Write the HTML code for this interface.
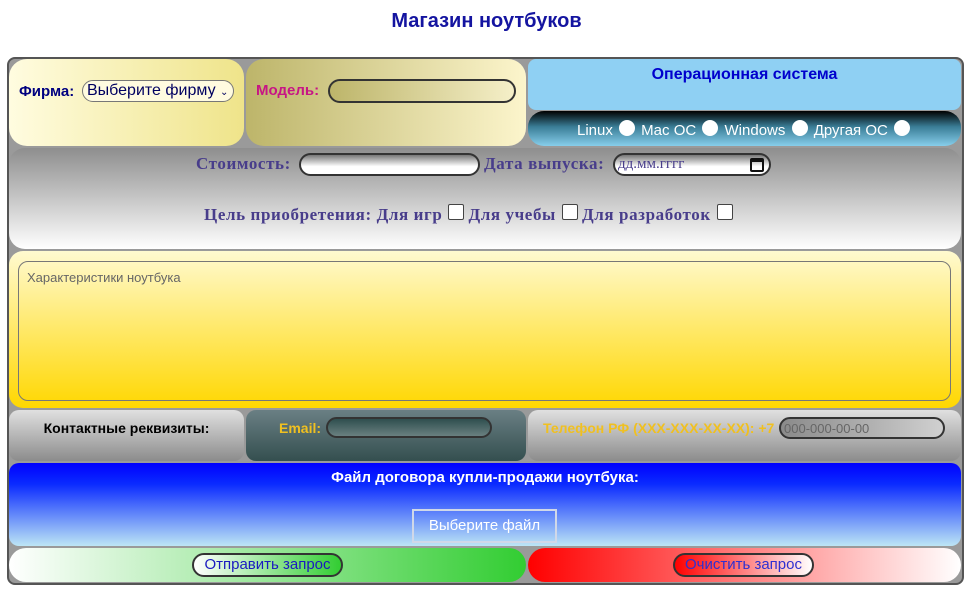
<!DOCTYPE html>
<html><head><meta charset="utf-8"><style>
*{box-sizing:border-box;margin:0;padding:0}
body{width:973px;height:595px;background:#fff;position:relative;font-family:"Liberation Sans",sans-serif;overflow:hidden}
.a{position:absolute}
h1{position:absolute;left:0;width:973px;top:10px;text-align:center;font-size:20px;color:#1414a0;font-weight:bold}
.outer{left:7px;top:57px;width:957px;height:528px;background:#9a9a9a;border:2px solid #555;border-radius:8px}
.c{position:absolute;border-radius:18px}
.t{position:absolute;white-space:nowrap}
.inp{position:absolute;border:2px solid #333;border-radius:12px}
.rad{display:inline-block;width:16px;height:16px;border-radius:50%;background:#fff;vertical-align:-1px;margin:0 2px}
.chk{display:inline-block;width:16px;height:16px;background:#fff;border:1px solid #444;border-radius:2px;vertical-align:0;margin:0 4px 0 6px}
.sf{font-family:"Liberation Serif",serif;font-weight:bold;color:#483d8b;font-size:17px;letter-spacing:0.6px}
</style></head><body>
<h1>Магазин ноутбуков</h1>
<div class="a outer"></div>
<div class="c" style="left:9px;top:59px;width:235px;height:87px;background:linear-gradient(to right,#fffce0,#efe48a)"></div>
<div class="t" style="left:19px;top:83px;font-size:15px;font-weight:bold;color:#000080">Фирма:</div>
<div class="a" style="left:82px;top:80px;width:152px;height:22px;border:1px solid #777;border-radius:11px;background:#fffbe0;font-size:16px;color:#000060;padding:1px 0 0 4px;white-space:nowrap">Выберите фирму <span style="font-size:10px">⌄</span></div>
<div class="c" style="left:246px;top:59px;width:280px;height:87px;background:linear-gradient(to right,#bdb56a,#fcf5cc)"></div>
<div class="t" style="left:256px;top:82px;font-size:15px;font-weight:bold;color:#c71585">Модель:</div>
<div class="inp" style="left:328px;top:79px;width:188px;height:24px;background:linear-gradient(to right,#bdb56a,#f5efc8)"></div>
<div class="c" style="left:528px;top:59px;width:433px;height:51px;background:#8fd0f3;border-radius:8px"></div>
<div class="t" style="left:528px;width:433px;text-align:center;top:66px;font-size:16px;font-weight:bold;color:#0000cd">Операционная система</div>
<div class="c" style="left:528px;top:111px;width:433px;height:35px;background:linear-gradient(#000,#3a7d96 45%,#87ceeb);border-radius:16px"></div>
<div class="t" style="left:528px;width:433px;text-align:center;top:120px;font-size:15px;color:#fff">Linux <span class="rad"></span> Mac OC <span class="rad"></span> Windows <span class="rad"></span> Другая ОС <span class="rad"></span></div>
<div class="c" style="left:9px;top:148px;width:952px;height:101px;background:linear-gradient(#8e8e8e,#fff);border-radius:16px"></div>
<div class="t sf" style="left:196px;top:154px">Стоимость:</div>
<div class="inp" style="left:299px;top:153px;width:181px;height:23px;background:linear-gradient(#777,#fff 60%)"></div>
<div class="t sf" style="left:484px;top:154px">Дата выпуска:</div>
<div class="inp" style="left:613px;top:153px;width:158px;height:23px;background:linear-gradient(#777,#fff 60%);font-family:'Liberation Serif',serif;font-size:15px;color:#483d8b;padding:1px 0 0 3px">дд.мм.гггг<span style="position:absolute;right:5px;top:3px;width:14px;height:14px;border:2px solid #111;border-top-width:4px;border-radius:2px"></span></div>
<div class="t sf" style="left:204px;top:204px">Цель приобретения: Для игр<span class="chk"></span>Для учебы<span class="chk"></span>Для разработок<span class="chk"></span></div>
<div class="c" style="left:9px;top:251px;width:952px;height:157px;background:linear-gradient(#fffad0,#ffd700);border-radius:14px"></div>
<div class="a" style="left:18px;top:261px;width:933px;height:140px;border:1px solid #777;border-radius:10px"></div>
<div class="t" style="left:27px;top:270px;font-size:13px;color:#666">Характеристики ноутбука</div>
<div class="c" style="left:9px;top:410px;width:235px;height:51px;background:linear-gradient(#e0e0e0,#8c8c8c);border-radius:10px"></div>
<div class="t" style="left:9px;width:235px;text-align:center;top:420px;font-size:14px;font-weight:bold;color:#000">Контактные реквизиты:</div>
<div class="c" style="left:246px;top:410px;width:280px;height:51px;background:linear-gradient(#6a7f84,#344f4f);border-radius:10px"></div>
<div class="t" style="left:279px;top:420px;font-size:14px;font-weight:bold;color:#f0c020">Email:</div>
<div class="inp" style="left:326px;top:417px;width:166px;height:21px;background:linear-gradient(#2f4f4f,#6a8080)"></div>
<div class="c" style="left:528px;top:410px;width:433px;height:51px;background:linear-gradient(#e0e0e0,#8c8c8c);border-radius:10px"></div>
<div class="t" style="left:543px;top:420px;font-size:14px;font-weight:bold;color:#f0c020">Телефон РФ (XXX-XXX-XX-XX): +7</div>
<div class="inp" style="left:779px;top:417px;width:166px;height:22px;background:linear-gradient(to right,#8a8a8a,#d0d0d0);font-size:13px;color:#666;padding:2px 0 0 3px">000-000-00-00</div>
<div class="c" style="left:9px;top:463px;width:952px;height:83px;background:linear-gradient(#0000ff,#0a2aff 25%,#bde6f5);border-radius:10px"></div>
<div class="t" style="left:9px;width:952px;text-align:center;top:469px;font-size:15px;font-weight:bold;color:#fff">Файл договора купли-продажи ноутбука:</div>
<div class="a" style="left:412px;top:509px;width:145px;height:34px;border:2px solid #d0d8e8;color:#fff;font-size:15px;text-align:center;padding-top:6px">Выберите файл</div>
<div class="c" style="left:9px;top:548px;width:517px;height:34px;background:linear-gradient(to right,#fff,#32cd32)"></div>
<div class="a" style="left:192px;top:553px;width:151px;height:24px;border:2px solid #333;border-radius:12px;background:linear-gradient(to right,#fff,#32cd32);font-size:15px;color:#1a1ac0;text-align:center;padding-top:1px">Отправить запрос</div>
<div class="c" style="left:528px;top:548px;width:433px;height:34px;background:linear-gradient(to right,#ff0000,#fff)"></div>
<div class="a" style="left:673px;top:553px;width:141px;height:24px;border:2px solid #333;border-radius:12px;background:linear-gradient(to right,#ff0000,#fff);font-size:15px;color:#3030d0;text-align:center;padding-top:1px">Очистить запрос</div>
</body></html>
